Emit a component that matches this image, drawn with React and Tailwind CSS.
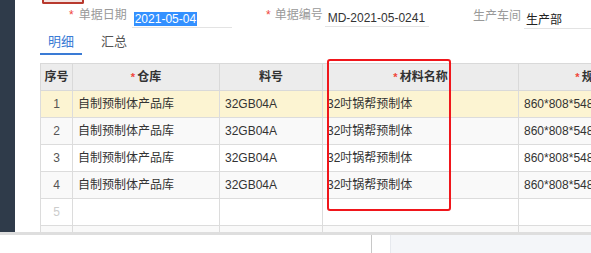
import React from "react";

const FONT = { fontFamily: '"Liberation Sans", "Noto Sans CJK SC", sans-serif' };

const rows = [
  { no: 1, store: "自制预制体产品库", code: "32GB04A", name: "32吋锅帮预制体", spec: "860*808*548", bg: "bg-[#fcf4d2]" },
  { no: 2, store: "自制预制体产品库", code: "32GB04A", name: "32吋锅帮预制体", spec: "860*808*548", bg: "bg-[#f9f9f9]" },
  { no: 3, store: "自制预制体产品库", code: "32GB04A", name: "32吋锅帮预制体", spec: "860*808*548", bg: "bg-white" },
  { no: 4, store: "自制预制体产品库", code: "32GB04A", name: "32吋锅帮预制体", spec: "860*808*548", bg: "bg-[#f9f9f9]" },
  { no: 5, store: "", code: "", name: "", spec: "", bg: "bg-white", empty: true },
  { no: 6, store: "", code: "", name: "", spec: "", bg: "bg-[#f9f9f9]", empty: true },
];

function Req() {
  return <span className="text-[#f0453a] text-[11px] mr-[2px]">*</span>;
}

function HeaderCell({ children, required, w }) {
  return (
    <th
      className={`${w} h-[27px] border border-[#d9d9d9] bg-[#ececec] text-[12px] font-bold text-[#333] text-center whitespace-nowrap`}
    >
      {required && <Req />}
      {children}
    </th>
  );
}

function App() {
  return (
    <div className="w-[591px] h-[253px] overflow-hidden bg-white flex flex-col whitespace-nowrap" style={FONT}>
      <div className="flex h-[232px] shrink-0">
        <div className="w-[15px] shrink-0 bg-[#2f3b4a]" />
        <div className="flex-1 min-w-0 overflow-hidden relative pl-[25px]">
          {/* bottom of the red button above */}
          <div className="ml-[2px] w-[42px] h-[4px] border-x-2 border-b-2 border-[#b8392e] bg-[#f3e3e1] rounded-b-[2px]" />

          {/* form row */}
          <div className="flex items-end h-[24px] text-[12px] w-[700px]">
            <div className="flex items-end shrink-0 ml-[29px] w-[197px]">
              <span className="text-[#f0453a] mr-[5px] pb-[4px]">*</span>
              <span className="text-[#999] pb-[4px]">单据日期</span>
              <div className="ml-[5px] w-[100px] shrink-0 border-b border-[#e3e3e3] h-[19px] pl-[2px] pt-[1px]">
                <span className="bg-[#3390ff] text-white px-[1px] leading-[14px] inline-block">2021-05-04</span>
              </div>
            </div>
            <div className="flex items-end shrink-0 w-[207px] pb-[1px]">
              <span className="text-[#f0453a] mr-[4px] pb-[3px]">*</span>
              <span className="text-[#999] pb-[3px]">单据编号</span>
              <div className="ml-[2px] w-[104px] shrink-0 border-b border-[#e3e3e3] h-[18px] pl-[3px] text-[#333]">
                MD-2021-05-0241
              </div>
            </div>
            <div className="flex items-end shrink-0 -mb-[1px]">
              <span className="text-[#999] pb-[4px]">生产车间</span>
              <div className="ml-[3px] w-[80px] shrink-0 border-b border-[#e3e3e3] h-[19px] pl-[2px] text-[#222] pt-[1px]">
                生产部
              </div>
            </div>
          </div>

          {/* tabs */}
          <div className="flex h-[27px] text-[13px]">
            <div className="w-[42px] shrink-0 flex items-center justify-center pt-[2px] text-[#3a7bd5] border-b-[2px] border-[#3a7bd5]">
              明细
            </div>
            <div className="ml-[19px] w-[26px] shrink-0 flex items-center justify-center text-[#555]">
              汇总
            </div>
          </div>

          {/* table */}
          <div className="mt-[8px] relative">
            <table className="table-fixed border-collapse w-[646px]">
              <thead>
                <tr>
                  <HeaderCell w="w-[32px]">序号</HeaderCell>
                  <HeaderCell w="w-[147px]" required>仓库</HeaderCell>
                  <HeaderCell w="w-[103px]">料号</HeaderCell>
                  <HeaderCell w="w-[196px]" required>材料名称</HeaderCell>
                  <HeaderCell w="w-[168px]" required>规格型号</HeaderCell>
                </tr>
              </thead>
              <tbody className="text-[12px] text-[#333]">
                {rows.map((r) => (
                  <tr key={r.no} className={`${r.bg} h-[27px]`}>
                    <td className={`border border-[#dcdcdc] text-center ${r.empty ? "text-[#ccc]" : "text-[#555]"}`}>
                      {r.no}
                    </td>
                    <td className="border border-[#dcdcdc] pl-[5px]">{r.store}</td>
                    <td className="border border-[#dcdcdc] pl-[5px]">{r.code}</td>
                    <td className="border border-[#dcdcdc] pl-[4px]">{r.name}</td>
                    <td className="border border-[#dcdcdc] pl-[5px]">{r.spec}</td>
                  </tr>
                ))}
              </tbody>
            </table>
          </div>

          {/* red highlight box */}
          <div className="absolute left-[312px] top-[59px] w-[124px] h-[152px] border-2 border-[#f0161b] rounded-[3px]" />
        </div>
      </div>

      {/* bottom strip */}
      <div className="flex-1 flex border-t-[3px] border-[#dedede]">
        <div className="w-[372px] border-r border-[#c8c8c8]" />
        <div className="w-[18px]" />
        <div className="flex-1 bg-[#f4f6f9] border-l border-[#e6e9ee]" />
      </div>
    </div>
  );
}

export default App;
